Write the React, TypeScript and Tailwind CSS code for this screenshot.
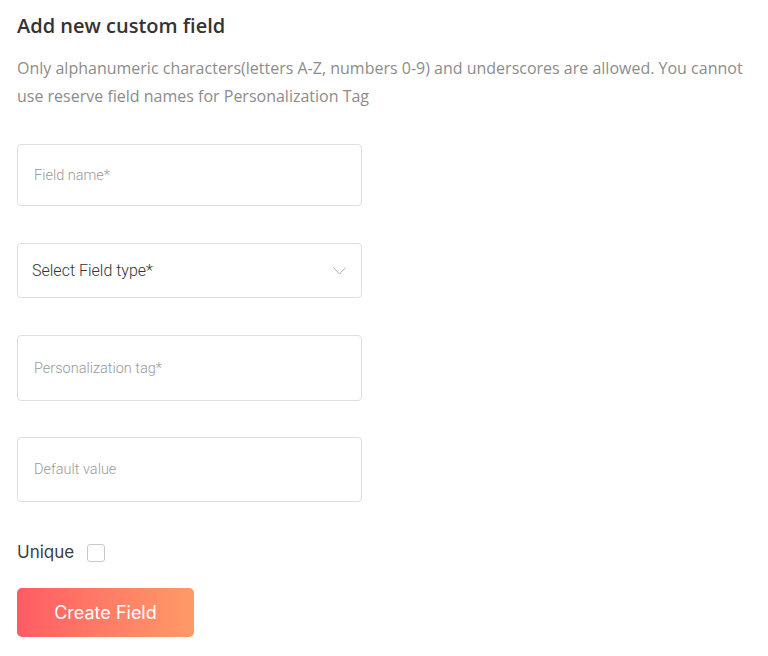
import React from 'react';

const Field: React.FC<{ placeholder: string; h: string }> = ({ placeholder, h }) => (
  <input
    placeholder={placeholder}
    className={`block w-[345px] ${h} rounded-[4px] border border-[#dedede] bg-white px-[16px] text-[14.5px] text-[#444] placeholder:text-[#9a9a9a] outline-none`}
    style={{ fontFamily: 'Roboto, sans-serif', fontWeight: 300 }}
  />
);

export default function App() {
  return (
    <div className="min-h-[656px] w-[768px] bg-white px-[17px] pt-[12px]">
      <h1
        className="text-[20px] font-semibold leading-[28px] text-[#333]"
        style={{ fontFamily: '"Open Sans", sans-serif' }}
      >
        Add new custom field
      </h1>
      <p
        className="mt-[14px] w-[740px] text-[16px] leading-[28px] text-[#8c8c8c]"
        style={{ fontFamily: '"Open Sans", sans-serif' }}
      >
        Only alphanumeric characters(letters A-Z, numbers 0-9) and underscores are allowed. You cannot use reserve field
        names for Personalization Tag
      </p>

      <div className="mt-[34px] flex flex-col">
        <Field placeholder="Field name*" h="h-[62px]" />

        <div className="mt-[37px] flex h-[55px] w-[345px] items-center justify-between rounded-[4px] border border-[#dedede] pl-[14px] pr-[15px]">
          <span className="text-[16px] text-[#333]" style={{ fontFamily: 'Roboto, sans-serif', fontWeight: 300 }}>
            Select Field type*
          </span>
          <svg width="13" height="8" viewBox="0 0 13 8" fill="none" stroke="#b0b0b0" strokeWidth="1">
            <path d="M0.5 0.5l6 6.5 6-6.5" />
          </svg>
        </div>

        <div className="mt-[37px]">
          <Field placeholder="Personalization tag*" h="h-[66px]" />
        </div>
        <div className="mt-[36px]">
          <Field placeholder="Default value" h="h-[65px]" />
        </div>
      </div>

      <label
        className="mt-[38px] flex items-center gap-[13px] text-[17px] text-[#3a3f4a]"
        style={{ fontFamily: 'Inter, sans-serif' }}
      >
        Unique
        <span className="inline-block h-[18px] w-[18px] rounded-[3px] border border-[#c8c8c8] bg-white" />
      </label>

      <button
        className="mt-[22px] h-[49px] w-[177px] rounded-[5px] bg-gradient-to-r from-[#ff5a65] to-[#ff9a66] text-[18px] text-white"
        style={{ fontFamily: 'Inter, sans-serif' }}
      >
        Create Field
      </button>
    </div>
  );
}
